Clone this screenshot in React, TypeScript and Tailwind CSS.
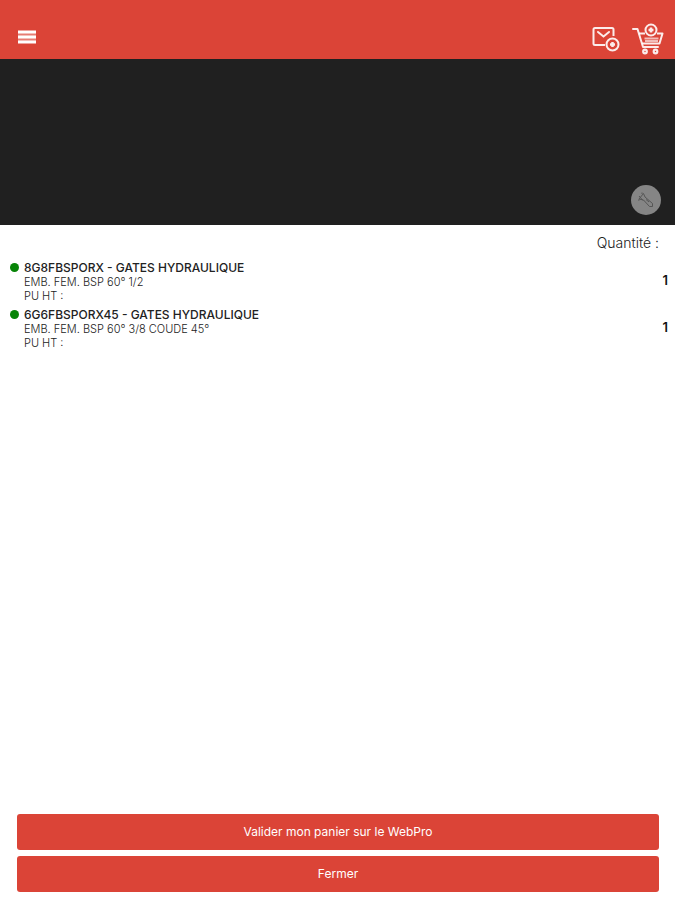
interface CartLine {
  id: number
  reference: string
  brand: string
  description: string
  quantity: number
}

const lines: CartLine[] = [
  {
    id: 1,
    reference: '8G8FBSPORX',
    brand: 'GATES HYDRAULIQUE',
    description: 'EMB. FEM. BSP 60° 1/2',
    quantity: 1,
  },
  {
    id: 2,
    reference: '6G6FBSPORX45',
    brand: 'GATES HYDRAULIQUE',
    description: 'EMB. FEM. BSP 60° 3/8 COUDE 45°',
    quantity: 1,
  },
]

function MenuIcon() {
  return (
    <svg width="18" height="14" viewBox="0 0 18 14" fill="#fff" aria-hidden="true">
      <rect width="18" height="12" y="1" fillOpacity="0.3" />
      <rect width="18" height="3" y="0.500" />
      <rect width="18" height="3" y="5.500" />
      <rect width="18" height="3" y="10.500" />
    </svg>
  )
}

function MailAddIcon() {
  return (
    <svg width="28" height="26" viewBox="0 0 28 26" fill="none" stroke="#fff" strokeOpacity="0.9" aria-hidden="true">
      <path d="M13 19H3Q1.500 19 1.500 17.500V3.500Q1.500 2 3 2H20Q21.500 2 21.500 3.500V10" strokeWidth="2" />
      <path d="M6 6L11.500 10.500L17 6" strokeWidth="2" strokeLinecap="round" />
      <circle cx="20.500" cy="18.500" r="6" strokeWidth="2" />
      <path d="M20.500 16V21M18 18.500H23" strokeWidth="2.500" />
    </svg>
  )
}

function CartAddIcon() {
  return (
    <svg width="32" height="32" viewBox="0 0 32 32" fill="none" stroke="#fff" strokeOpacity="0.9" aria-hidden="true">
      <path d="M1 6H5.500L11 24H26" strokeWidth="2" strokeLinecap="round" strokeLinejoin="round" />
      <path d="M7 10.500H13M25 10.500H30.500L27.500 20.500H10" strokeWidth="2" strokeLinejoin="round" />
      <path d="M12.500 15.500H26.500M13 18H26" strokeWidth="2" strokeOpacity="0.65" />
      <circle cx="19" cy="7" r="5.500" strokeWidth="2" />
      <path d="M19 4.500V9.500M16.500 7H21.500" strokeWidth="2.500" />
      <circle cx="13" cy="28.500" r="1.800" strokeWidth="2.200" />
      <circle cx="23.500" cy="28.500" r="1.800" strokeWidth="2.200" />
    </svg>
  )
}

function TorchIcon() {
  return (
    <svg width="18" height="18" viewBox="0 0 18 18" fill="none" stroke="#555" strokeLinejoin="round" aria-hidden="true">
      <path d="M2 8L6.500 2.500L8 6L15.500 12.500V15.500H12.500L6.500 9Z" strokeWidth="1" />
      <path d="M2 5L6 9.500M9 8.500L12 11M5 1.500V3M1 9H2.500" strokeWidth="1" />
    </svg>
  )
}

function CartRow({ line }: { line: CartLine }) {
  return (
    <li className="flex items-center justify-between pl-[10px] pr-[7px]">
      <div className="flex items-start gap-[5px]">
        <span className="mt-[2px] h-[9px] w-[9px] shrink-0 rounded-full bg-[#078407]" />
        <div className="text-[11px] font-light leading-[14px] text-[#222]">
          <p className="text-[12px] font-medium leading-[14px]">
            {line.reference} - {line.brand}
          </p>
          <p>{line.description}</p>
          <p>PU HT :</p>
        </div>
      </div>
      <span className="pb-[3px] text-[13px] font-semibold text-[#111]">{line.quantity}</span>
    </li>
  )
}

export default function App() {
  return (
    <div className="flex min-h-screen flex-col bg-white font-['Inter',sans-serif]">
      <header className="flex h-[59px] items-center justify-between bg-[#db4437] pl-[18px] pr-[11px] pt-[14px]">
        <button type="button" aria-label="Menu">
          <MenuIcon />
        </button>
        <div className="flex items-center gap-3 pt-1">
          <button type="button" aria-label="Envoyer par mail">
            <MailAddIcon />
          </button>
          <button type="button" aria-label="Ajouter au panier">
            <CartAddIcon />
          </button>
        </div>
      </header>

      {/* Scanner preview */}
      <section className="flex h-[166px] items-end justify-end bg-[#202020] pb-[10px] pr-[14px]">
        <button
          type="button"
          aria-label="Lampe torche"
          className="flex h-[30px] w-[30px] items-center justify-center rounded-full bg-[#858585]"
        >
          <TorchIcon />
        </button>
      </section>

      <main className="flex-1">
        <p className="pb-[9px] pr-4 pt-[9px] text-right text-[14px] font-light leading-[18px] text-[#222]">
          Quantité :
        </p>
        <ul className="flex flex-col gap-[5px]">
          {lines.map((line) => (
            <CartRow key={line.id} line={line} />
          ))}
        </ul>
      </main>

      <footer className="flex flex-col gap-[6px] pb-2 pl-[17px] pr-4">
        <button type="button" className="h-9 rounded-[3px] bg-[#db4437] text-[12px] text-white">
          Valider mon panier sur le WebPro
        </button>
        <button type="button" className="h-9 rounded-[3px] bg-[#db4437] text-[12px] text-white">
          Fermer
        </button>
      </footer>
    </div>
  )
}
